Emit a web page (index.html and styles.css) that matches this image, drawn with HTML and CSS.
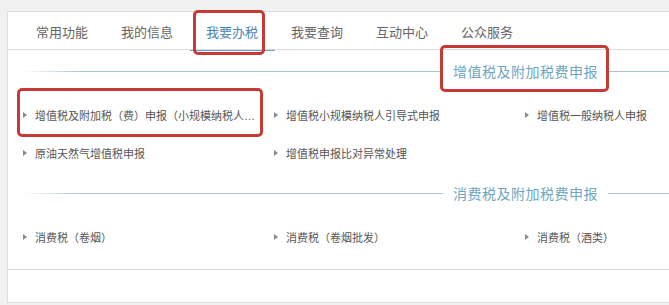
FILE: index.html
```html
<!DOCTYPE html>
<html lang="zh-CN">
<head>
  <meta charset="UTF-8" />
  <meta name="viewport" content="width=device-width, initial-scale=1.0" />
  <title>我要办税</title>
  <link rel="stylesheet" href="styles.css">
</head>
<body>
  <div class="panel">
    <ul class="tabs">
      <li class="tab">常用功能</li>
      <li class="tab">我的信息</li>
      <li class="tab active">我要办税</li>
      <li class="tab">我要查询</li>
      <li class="tab">互动中心</li>
      <li class="tab">公众服务</li>
    </ul>

    <div class="content">
      <section class="group">
        <h3 class="group-title">
          <span class="line line-left"></span>
          <span class="title-text marked">增值税及附加税费申报</span>
          <span class="line line-right"></span>
        </h3>
        <ul class="items">
          <li class="item marked"><span class="arrow"></span><span class="label">增值税及附加税（费）申报（小规模纳税人适用）</span></li>
          <li class="item"><span class="arrow"></span><span class="label">增值税小规模纳税人引导式申报</span></li>
          <li class="item"><span class="arrow"></span><span class="label">增值税一般纳税人申报</span></li>
          <li class="item"><span class="arrow"></span><span class="label">原油天然气增值税申报</span></li>
          <li class="item"><span class="arrow"></span><span class="label">增值税申报比对异常处理</span></li>
        </ul>
      </section>

      <section class="group">
        <h3 class="group-title">
          <span class="line line-left"></span>
          <span class="title-text">消费税及附加税费申报</span>
          <span class="line line-right"></span>
        </h3>
        <ul class="items">
          <li class="item"><span class="arrow"></span><span class="label">消费税（卷烟）</span></li>
          <li class="item"><span class="arrow"></span><span class="label">消费税（卷烟批发）</span></li>
          <li class="item"><span class="arrow"></span><span class="label">消费税（酒类）</span></li>
        </ul>
      </section>
    </div>

    <div class="footer"></div>
  </div>
</body>
</html>
```

FILE: styles.css
```css
body {
  margin: 0;
  background: #f1f1f1;
  font-family: "Noto Sans CJK SC", sans-serif;
  color: #555;
  overflow: hidden;
  height: 305px;
}

ul {
  list-style: none;
  margin: 0;
  padding: 0;
}

.panel {
  margin: 11px 0 0 7px;
  width: 700px;
  background: #fff;
  border: 1px solid #dcdcdc;
}

/* tab bar */
.tabs {
  display: flex;
  height: 37px;
  padding-left: 11.5px;
  border-bottom: 1px solid #dcdcdc;
}

.tab {
  width: 85px;
  padding-top: 2px;
  line-height: 35px;
  text-align: center;
  font-size: 13px;
  color: #666;
}

.tab.active {
  position: relative;
  color: #4a84b4;
  height: 36px;
  border-bottom: 1px solid #6f9cc0;
}

.tab.active::after {
  content: "";
  position: absolute;
  left: 3.5px;
  right: 10px;
  top: -2px;
  bottom: -5px;
  border: 3px solid #c63a36;
  border-radius: 5px;
}

/* groups */
.content {
  padding: 0 0 13px 15px;
}

.group {
  padding-top: 11px;
}

.group-title {
  display: flex;
  align-items: center;
  height: 20px;
  margin: 0;
  font-weight: normal;
}

.line {
  height: 1px;
  background: #a7c5cf;
}

.line-left {
  flex: 1;
  background: linear-gradient(to right, rgba(167, 197, 207, 0) 0, #a7c5cf 60px);
}

.line-right {
  width: 100px;
}

.title-text {
  position: relative;
  padding: 0 10px;
  font-size: 14px;
  letter-spacing: 0.5px;
  line-height: 20px;
  color: #6ea6c2;
}

.title-text.marked::after {
  content: "";
  position: absolute;
  left: -3px;
  right: -1px;
  top: -16px;
  bottom: -11px;
  border: 3px solid #c63a36;
  border-radius: 5px;
}

.items {
  display: grid;
  grid-template-columns: repeat(3, 251px);
  grid-auto-rows: 38px;
  margin-top: 15px;
}

.item {
  position: relative;
  display: flex;
  align-items: center;
  font-family: "Liberation Sans", "Noto Sans CJK SC", sans-serif;
  font-size: 11px;
  color: #555;
}

.arrow {
  flex: none;
  width: 0;
  height: 0;
  border-left: 4px solid #8a8a8a;
  border-top: 3px solid transparent;
  border-bottom: 3px solid transparent;
}

.label {
  margin-left: 8px;
  max-width: 224px;
  white-space: nowrap;
  overflow: hidden;
  text-overflow: ellipsis;
}

.item.marked::after {
  content: "";
  position: absolute;
  left: -6px;
  width: 246px;
  top: -8px;
  bottom: -3px;
  border: 3px solid #c63a36;
  border-radius: 5px;
  box-sizing: border-box;
}

.footer {
  height: 32px;
  border-top: 1px solid #d6d6d6;
}
```
